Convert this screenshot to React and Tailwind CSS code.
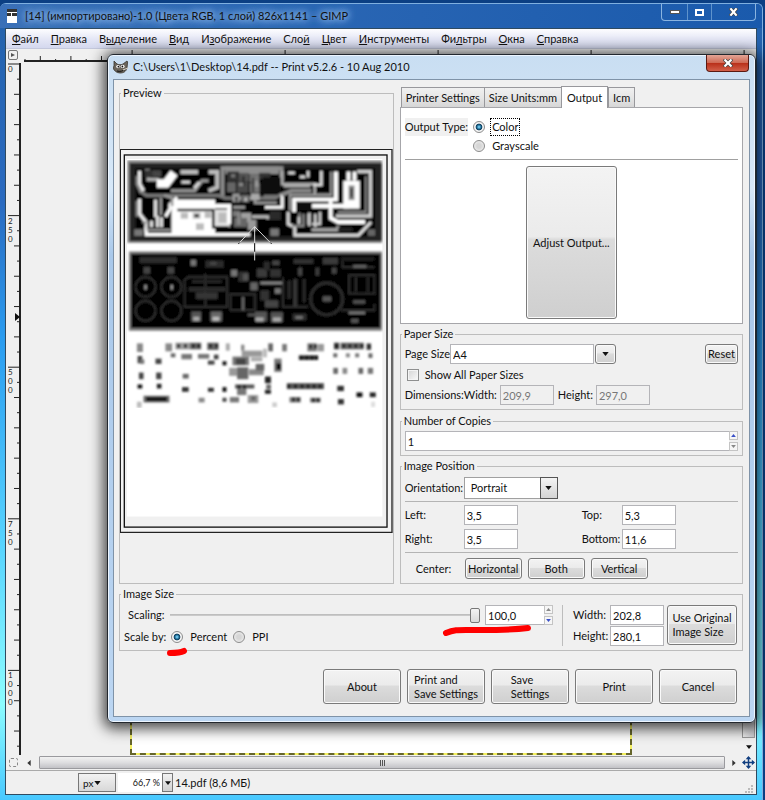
import { useState } from 'react';
import clsx from 'clsx';

const MENU = [
  ['', 'Ф', 'айл'],
  ['', 'П', 'равка'],
  ['В', 'ы', 'деление'],
  ['', 'В', 'ид'],
  ['И', 'з', 'ображение'],
  ['Сло', 'й', ''],
  ['', 'Ц', 'вет'],
  ['', 'И', 'нструменты'],
  ['Фи', 'л', 'ьтры'],
  ['', 'О', 'кна'],
  ['', 'С', 'правка'],
];

const TABS = ['Printer Settings', 'Size Units:mm', 'Output', 'Icm'];

// copper traces of the first board: [shade, stroke width, path]
const TRACES = [
  ['#8c8c8c', 12, 'M342 352V262H520V300'],
  ['#8c8c8c', 22, 'M350 268H512'],
  ['#777', 10, 'M92 330L112 344H330L350 352H500L520 340'],
  ['#eee', 10, 'M92 270V310L104 330M92 355V400L112 425V455'],
  ['#888', 8, 'M84 285V310L96 335M84 360V408'],
  ['#aaa', 10, 'M108 270H118V296H150'],
  ['#fff', 26, 'M144 308H172L196 276'],
  ['#bbb', 12, 'M215 273H268M300 273H326V320L300 330'],
  ['#999', 9, 'M186 330H258L280 300H300'],
  ['#ddd', 8, 'M218 304H244M256 322L272 304'],
  ['#fff', 10, 'M170 408L184 385V372L205 350'],
  ['#999', 8, 'M156 350V404M166 344L190 352V376'],
  ['#fff', 12, 'M205 376H362V430'],
  ['#ddd', 9, 'M140 356V410M128 420V440M146 405V440M158 410V440'],
  ['#fff', 10, 'M112 440V462H426'],
  ['#999', 6, 'M100 425H116V448H186'],
  ['#999', 8, 'M374 380H410M374 352H440V366H506'],
  ['#fff', 9, 'M470 380H522V340'],
  ['#bbb', 8, 'M430 408H478V416'],
  ['#aaa', 8, 'M522 270V310H620V340M526 316H606'],
  ['#888', 12, 'M520 342L550 330H610'],
  ['#ddd', 8, 'M540 276H560M575 288H592M600 270V290M640 270V312H616'],
  ['#fff', 12, 'M684 272V356H558V394'],
  ['#999', 7, 'M670 272V342H546V390'],
  ['#fff', 14, 'M612 376H724'],
  ['#fff', 12, 'M668 360V412L690 424H772'],
  ['#ccc', 10, 'M748 272H788V406H684'],
  ['#888', 6, 'M774 286V394H690'],
  ['#fff', 12, 'M740 272V300M722 272V300'],
  ['#fff', 50, 'M731 300V384'],
  ['#ddd', 9, 'M540 394V430L560 440V464H752L790 424'],
  ['#888', 7, 'M552 436H586V400M600 400V432M574 396V430'],
  ['#ccc', 8, 'M572 408V430M604 396V436M622 400V440M636 394V430H612'],
  ['#aaa', 10, 'M610 448H690V436'],
];

// grey chips in the dense middle of the first board: x, y, w, h, shade
const CHIPS = [
  [356, 272, 36, 30, '#333'], [392, 276, 30, 26, '#555'], [424, 280, 28, 24, '#777'], [452, 276, 34, 20, '#333'],
  [356, 304, 26, 30, '#666'], [386, 302, 34, 34, '#4a4a4a'], [424, 306, 30, 30, '#777'], [462, 290, 56, 46, '#111'],
  [372, 338, 22, 26, '#999'], [398, 342, 26, 22, '#666'], [428, 338, 26, 20, '#aaa'], [466, 342, 40, 14, '#777'],
  [372, 390, 24, 18, '#777'], [398, 396, 30, 30, '#a0a0a0'], [376, 412, 40, 28, '#666'], [418, 418, 26, 30, '#999'],
  [484, 392, 34, 26, '#2c2c2c'], [486, 444, 26, 22, '#777'], [780, 446, 22, 20, '#666'], [76, 446, 26, 20, '#777'],
  [108, 268, 30, 22, '#333'], [132, 268, 26, 20, '#444'], [568, 366, 40, 22, '#080808'], [690, 440, 44, 12, '#222'],
  [368, 280, 12, 10, '#777'], [400, 286, 10, 30, '#333'], [430, 290, 8, 44, '#444'], [440, 300, 10, 18, '#999'],
  [392, 306, 12, 10, '#888'], [380, 348, 8, 14, '#444'], [408, 350, 8, 12, '#bbb'], [386, 396, 10, 36, '#888'],
];

// silkscreen boxes of the second board
const SILK = [
  [92, 530, 112, 18, '#2f2f2f'], [104, 560, 20, 20, '#444'], [176, 560, 20, 20, '#444'], [246, 538, 16, 18, '#777'],
  [290, 540, 56, 22, '#2a2a2a'], [304, 544, 20, 10, '#444'], [368, 568, 18, 20, '#777'], [390, 574, 30, 30, '#333'],
  [404, 580, 16, 20, '#555'], [426, 606, 22, 24, '#666'], [456, 604, 66, 8, '#888'], [446, 564, 30, 26, '#3a3a3a'],
  [486, 566, 32, 24, '#333'], [492, 540, 22, 14, '#444'], [466, 544, 18, 26, '#2c2c2c'], [500, 624, 18, 16, '#777'],
  [456, 630, 26, 30, '#333'], [400, 650, 8, 40, '#666'], [418, 700, 50, 8, '#555'], [440, 694, 36, 30, '#555'],
  [442, 712, 24, 12, '#aaa'], [488, 696, 36, 30, '#555'], [494, 712, 24, 12, '#aaa'], [248, 694, 30, 30, '#555'],
  [254, 710, 18, 12, '#aaa'], [306, 694, 34, 30, '#666'], [312, 710, 20, 12, '#bbb'], [552, 700, 44, 20, '#2a2a2a'],
  [562, 708, 22, 8, '#777'], [556, 536, 60, 14, '#333'], [570, 562, 12, 24, '#444'], [622, 562, 12, 24, '#3a3a3a'],
  [644, 532, 46, 20, '#3a3a3a'], [672, 562, 14, 18, '#444'], [700, 530, 100, 10, '#222'], [736, 554, 40, 8, '#666'],
  [736, 660, 36, 10, '#555'], [722, 694, 50, 8, '#777'], [730, 716, 22, 12, '#555'], [644, 648, 26, 16, '#555'],
  [470, 660, 40, 22, '#444'], [240, 620, 110, 14, '#2a2a2a'], [262, 636, 66, 20, '#343434'], [250, 600, 90, 8, '#282828'],
  [556, 596, 10, 84, '#3a3a3a'], [538, 600, 10, 56, '#2a2a2a'], [584, 596, 8, 70, '#2c2c2c'],
];

// drill pads of the third board
const PADS = [
  [84, 790, 18, 26, '#888'], [170, 790, 20, 24, '#888'], [200, 788, 44, 20, '#999'], [244, 788, 34, 20, '#666'],
  [296, 788, 34, 22, '#666'], [352, 790, 12, 22, '#aaa'], [398, 794, 10, 18, '#888'], [480, 790, 14, 24, '#666'],
  [522, 792, 14, 22, '#777'], [598, 790, 28, 24, '#777'], [628, 792, 20, 22, '#999'], [678, 788, 16, 20, '#444'],
  [698, 788, 70, 20, '#666'], [776, 790, 14, 20, '#555'], [86, 828, 14, 22, '#444'], [94, 838, 12, 14, '#777'],
  [140, 836, 18, 16, '#444'], [186, 820, 14, 12, '#666'], [218, 822, 32, 16, '#777'], [268, 822, 34, 14, '#777'],
  [316, 824, 14, 14, '#444'], [298, 842, 20, 12, '#444'], [342, 844, 12, 12, '#111'], [572, 826, 58, 14, '#333'],
  [676, 820, 12, 12, '#666'], [714, 820, 12, 12, '#888'], [742, 820, 12, 12, '#777'], [782, 820, 12, 14, '#666'],
  [400, 812, 62, 18, '#999'], [372, 830, 50, 26, '#777'], [382, 836, 30, 18, '#444'], [428, 832, 34, 12, '#aaa'],
  [464, 806, 12, 26, '#bbb'], [498, 836, 22, 40, '#777'], [504, 850, 14, 20, '#111'], [362, 864, 24, 24, '#999'],
  [386, 862, 34, 36, '#666'], [422, 868, 44, 18, '#888'], [442, 852, 26, 20, '#666'], [470, 890, 18, 20, '#222'],
  [474, 914, 14, 14, '#666'], [90, 878, 14, 20, '#444'], [142, 878, 16, 20, '#444'], [222, 882, 18, 14, '#666'],
  [86, 914, 14, 12, '#111'], [144, 912, 14, 14, '#222'], [220, 922, 20, 14, '#333'], [298, 924, 18, 12, '#333'],
  [342, 922, 12, 14, '#111'], [380, 914, 58, 12, '#555'], [386, 926, 28, 20, '#777'], [536, 910, 112, 18, '#555'],
  [470, 930, 18, 12, '#222'], [676, 864, 14, 18, '#666'], [704, 864, 14, 18, '#888'], [752, 864, 14, 18, '#666'],
  [780, 864, 16, 18, '#777'], [688, 918, 20, 16, '#333'], [746, 938, 18, 14, '#111'], [786, 938, 18, 14, '#222'],
  [690, 958, 18, 16, '#333'], [104, 948, 78, 20, '#666'], [112, 952, 62, 12, '#111'], [84, 966, 14, 18, '#bbb'],
  [270, 954, 18, 14, '#888'], [342, 954, 12, 12, '#444'], [364, 952, 28, 16, '#777'], [418, 946, 32, 24, '#999'],
  [428, 950, 14, 12, '#666'], [544, 952, 34, 16, '#777'], [606, 954, 32, 14, '#777'], [492, 968, 14, 14, '#ccc'],
  [790, 966, 12, 16, '#ddd'],
];

// dark pins inside the longer pad rows
const PINS = [
  [206, 792], [226, 792], [250, 792], [266, 792], [302, 792], [320, 792], [682, 792], [704, 792], [722, 792], [740, 792],
  [758, 792], [780, 794], [576, 828], [592, 828], [608, 828], [622, 828], [538, 914], [558, 914], [578, 914], [596, 914],
  [614, 914], [632, 914], [388, 916], [404, 916], [552, 954], [566, 954], [612, 956], [626, 956], [604, 794], [618, 794],
];

const Rects = ({ items }) =>
  items.map(([x, y, w, h, fill], i) => <rect key={i} x={x} y={y} width={w} height={h} fill={fill} />);

const PreviewDrawing = () => (
  <svg viewBox="33 204 822 1158" className="block w-full" aria-label="Page preview">
    <filter id="thumb" x="0" y="0" width="1" height="1">
      <feGaussianBlur stdDeviation="3" />
    </filter>
    <rect x="34" y="205" width="819" height="1155" fill="#f2f2f2" stroke="#222" strokeWidth="4" />
    <rect x="46" y="222" width="792" height="1122" fill="#f0f0f0" stroke="#111" strokeWidth="4" />
    <rect x="54" y="234" width="770" height="1078" fill="#fff" />

    {/* the boards are a low resolution thumbnail, so they are drawn soft */}
    <g filter="url(#thumb)">
      <rect x="55" y="238" width="768" height="249" fill="#888" />
      <rect x="62" y="246" width="760" height="236" fill="#232323" />
      <rect x="80" y="262" width="722" height="206" fill="#050505" />
      <rect x="188" y="356" width="132" height="106" fill="#fff" />
      <rect x="318" y="386" width="46" height="54" fill="#e2e2e2" />
      <g fill="none">
        {TRACES.map(([stroke, width, d]) => (
          <path key={d} d={d} stroke={stroke} strokeWidth={width} />
        ))}
      </g>
      <path d="M206 388H314V440H360" fill="none" stroke="#111" strokeWidth="8" />
      <Rects items={CHIPS} />
      <g fill="#bbb">
        <rect x="216" y="396" width="22" height="18" />
        <rect x="252" y="396" width="24" height="18" />
        <rect x="288" y="394" width="20" height="18" />
        <rect x="262" y="428" width="24" height="20" />
        <rect x="330" y="396" width="24" height="30" />
      </g>
      <rect x="258" y="400" width="12" height="10" fill="#333" />
      <rect x="722" y="314" width="18" height="44" fill="#888" />
      <rect x="727" y="322" width="8" height="28" fill="#444" />

      <rect x="60" y="513" width="763" height="239" fill="#7c7c7c" />
      <rect x="66" y="520" width="752" height="224" fill="#030303" />
      <g fill="none" stroke="#2b2b2b" strokeWidth="7">
        <circle cx="110" cy="620" r="30" />
        <circle cx="188" cy="620" r="30" />
        <circle cx="110" cy="692" r="30" />
        <circle cx="188" cy="692" r="30" />
        <circle cx="656" cy="656" r="48" strokeWidth="10" />
        <path d="M228 598V680H356V590H240ZM290 580V680" />
        <path d="M366 642H440V690H366ZM524 592V680H600M724 584H800V640H724ZM744 590V634M780 590V634" />
        <path d="M700 690H800V670M704 540V560H800" />
      </g>
      <Rects items={SILK} />
      <g fill="#aaa">
        <rect x="107" y="614" width="6" height="14" />
        <rect x="186" y="614" width="6" height="14" />
      </g>

      <Rects items={PADS} />
      <g fill="#111">
        {PINS.map(([x, y]) => (
          <rect key={`${x}-${y}`} x={x} y={y} width="8" height="11" />
        ))}
      </g>
    </g>

    <path d="M439 438V490M439 438L390 490M439 438L490 490" fill="none" stroke="#ddd" strokeWidth="3" />
    <path d="M439 488V514M394 486L390 490M486 486L490 490" stroke="#000" strokeWidth="3" />
    <path d="M439 514V540" stroke="#ddd" strokeWidth="3" />
  </svg>
);

const Wilber = () => (
  <svg viewBox="0 0 16 14" className="h-[14px] w-4 shrink-0" aria-hidden="true">
    <path d="M1 6L1 1L4 4C6 5 8 5 10 4L14 1L14.6 2L14 8C13 12 10 13 7 13C3 13 1 10 0 8Z" fill="#6b655c" stroke="#39352f" strokeWidth="0.8" />
    <ellipse cx="5" cy="6.6" rx="1.8" ry="1.6" fill="#fff" />
    <ellipse cx="9.6" cy="6.4" rx="2" ry="1.7" fill="#fff" />
    <circle cx="5.4" cy="6.7" r="0.9" fill="#111" />
    <circle cx="9.4" cy="6.5" r="0.9" fill="#111" />
    <path d="M4 11C7 12 10 11 13 9" stroke="#111" strokeWidth="1" fill="none" />
    <path d="M10 10L15 8" stroke="#d8d2c6" strokeWidth="1.2" />
  </svg>
);

const Arrow = ({ dir = 'down', className }) => (
  <svg viewBox="0 0 8 5" className={className} aria-hidden="true">
    <path d={dir === 'down' ? 'M0 0H8L4 5Z' : 'M0 5H8L4 0Z'} fill="currentColor" />
  </svg>
);

const Group = ({ title, className, bodyClass, children }) => (
  <fieldset className={clsx('min-w-0 border border-[#bdbdbd]', className)}>
    <legend className="ml-px h-4 px-[2px] leading-4">{title}</legend>
    <div className={bodyClass}>{children}</div>
  </fieldset>
);

const Field = ({ id, value, disabled, className }) => (
  <input
    id={id}
    type="text"
    defaultValue={value}
    disabled={disabled}
    className={clsx(
      'h-5 min-w-0 border border-[#b4b4b8] px-[2px] outline-none',
      disabled ? 'bg-[#f0f0f0] text-[#777]' : 'bg-white text-[#111]',
      className
    )}
  />
);

const Button = ({ className, children }) => (
  <button
    type="button"
    className={clsx(
      'flex items-center justify-center rounded-[3px] border border-[#7a7a7a] bg-[linear-gradient(#f3f3f3,#ebebeb_46%,#dcdcdc_48%,#cfcfcf)] shadow-[inset_0_0_0_1px_#fafafa]',
      className
    )}
  >
    {children}
  </button>
);

const Radio = ({ name, label, checked, onChange, focused, className }) => (
  <label className={clsx('flex items-center', className)}>
    <input
      type="radio"
      name={name}
      checked={checked}
      onChange={onChange}
      className="mr-[5px] size-3 shrink-0 appearance-none rounded-full border border-[#8c8c8c] bg-[radial-gradient(circle,#d6d6d6_30%,#f8f8f8)] checked:bg-[radial-gradient(circle,#6cc6ee_8%,#12567c_34%,#123c58_44%,#f4f4f4_52%)]"
    />
    <span className={clsx('border px-px leading-4', focused ? 'border-dotted border-black' : 'border-transparent')}>{label}</span>
  </label>
);

const Spinner = ({ active, label }) => (
  <div className="flex h-5 w-[9px] shrink-0 flex-col justify-between">
    <button type="button" aria-label={`${label} up`} className={clsx('flex h-[9px] items-center justify-center border border-[#c4c4c4] bg-[#f6f6f6]', active === 'up' ? 'text-[#3a50c8]' : 'text-[#888]')}>
      <Arrow dir="up" className="h-[3px] w-[5px]" />
    </button>
    <button type="button" aria-label={`${label} down`} className={clsx('flex h-[9px] items-center justify-center border border-[#c4c4c4] bg-[#f6f6f6]', active === 'down' ? 'text-[#3a50c8]' : 'text-[#888]')}>
      <Arrow className="h-[3px] w-[5px]" />
    </button>
  </div>
);

const VerticalRuler = () => {
  const ticks = Array.from({ length: 46 }, (_, i) => i);
  return (
    <svg width="14" className="h-full shrink-0" aria-hidden="true">
      <path d="M13 0V1200" stroke="#222" strokeWidth="2" />
      {ticks.map((i) => {
        const y = 1 + i * 15.16;
        const length = i % 10 === 0 ? 12 : i % 2 === 0 ? 6 : 3;
        return <path key={i} d={`M${13 - length} ${y}H13`} stroke="#222" />;
      })}
      {['0', '250', '500', '750', '1000'].map((text, n) =>
        text.split('').map((ch, k) => (
          <text key={`${text}${k}`} x="1" y={9 + n * 151.6 + k * 9} fontSize="8" fill="#222">
            {ch}
          </text>
        ))
      )}
      <path d="M8 250L13 254L8 258Z" fill="#111" />
    </svg>
  );
};

const HorizontalRuler = () => (
  <svg height="14" className="min-w-0 flex-1" aria-hidden="true">
    <path d="M2 12H1200" stroke="#222" strokeWidth="2" />
    {Array.from({ length: 50 }, (_, i) => (
      <path key={i} d={`M${3 + i * 15.3} 12V${(i - 7) % 10 === 0 ? 1 : i % 2 === 1 ? 7 : 10}`} stroke="#222" />
    ))}
  </svg>
);

const OutputTab = () => {
  const [type, setType] = useState('color');
  return (
    <div className="flex h-[217px] flex-col border border-[#a6a6aa] bg-white px-1 pt-[10px] pb-1">
      <div className="flex items-start gap-[5px]">
        <span className="bg-[#f0f0f0] leading-[18px]">Output Type:</span>
        <div className="flex flex-col gap-px">
          <Radio name="output" label="Color" focused checked={type === 'color'} onChange={() => setType('color')} />
          <Radio name="output" label="Grayscale" checked={type === 'gray'} onChange={() => setType('gray')} />
        </div>
      </div>
      <hr className="mt-1 mb-[6px] border-[#a0a0a0]" />
      <Button className="mx-auto h-[153px] w-[91px]">Adjust Output...</Button>
    </div>
  );
};

const PrintDialog = () => {
  const [scaleBy, setScaleBy] = useState('percent');

  return (
    <section className="absolute top-[54px] right-[9px] left-[107px] rounded-[6px] border border-[#23282e] bg-[linear-gradient(#c9def2,#d7e8f8_20%,#a9c8ea_30%,#bcd6f2)] px-[5px] pb-[5px] shadow-[inset_0_0_0_1px_#eef6ff,0_2px_14px_4px_rgba(0,0,0,0.7)]">
      <header className="flex h-6 items-center gap-1">
        <Wilber />
        <h2 className="flex-1">C:\Users\1\Desktop\14.pdf -- Print v5.2.6 - 10 Aug 2010</h2>
        <button type="button" aria-label="Close" className="mr-px flex h-[17px] w-[43px] items-center justify-center self-start rounded-b-[4px] border border-t-0 border-[#5b1a12] bg-[linear-gradient(#e3a596,#cf6a55_48%,#b9301a_52%,#d2604a)]">
          <svg viewBox="0 0 10 8" className="h-2 w-[10px]" aria-hidden="true">
            <path d="M1 0L9 8M9 0L1 8" stroke="#444" strokeWidth="3.6" />
            <path d="M1.5 0.5L8.5 7.5M8.5 0.5L1.5 7.5" stroke="#fff" strokeWidth="2.2" />
          </svg>
        </button>
      </header>

      <div className="border border-[#7f93a8] bg-[#f0f0f0] pt-[5px] pr-[6px] pb-3 pl-[5px]">
        <div className="grid grid-cols-[4fr_5fr] gap-[6px]">
          <Group title="Preview" bodyClass="flex h-full flex-col justify-center pb-[2px]">
            <PreviewDrawing />
          </Group>

          <div className="flex min-w-0 flex-col">
            <div role="tablist" className="flex items-end pt-px pl-px">
              {TABS.map((tab) => (
                <button
                  key={tab}
                  type="button"
                  role="tab"
                  aria-selected={tab === 'Output'}
                  className={clsx(
                    'border border-b-0 border-[#98989c]',
                    tab === 'Output'
                      ? 'relative -mb-px h-[22px] bg-white px-[5px]'
                      : 'h-5 bg-[linear-gradient(#f0f0f0,#e6e6e6_50%,#d6d6d6)] px-1',
                    (tab === 'Printer Settings' || tab === 'Size Units:mm') && 'border-r-0'
                  )}
                >
                  {tab}
                </button>
              ))}
            </div>
            <OutputTab />

            <Group title="Paper Size" className="mt-[2px]" bodyClass="px-1 pt-[2px] pb-1">
              <div className="flex items-center">
                <label htmlFor="page-size">Page Size</label>
                <Field id="page-size" value="A4" className="w-[144px]" />
                <Button className="ml-px h-5 w-[21px]">
                  <Arrow className="h-1 w-[7px]" />
                </Button>
                <Button className="ml-auto h-5 w-[33px]">Reset</Button>
              </div>
              <label className="flex h-[21px] items-center gap-[6px] pl-[2px]">
                <input type="checkbox" className="size-3 appearance-none border border-[#8e8f8f] bg-[linear-gradient(135deg,#d4d4d4,#fafafa)] shadow-[inset_0_0_0_1px_#f4f4f4] checked:bg-[#12567c]" />
                Show All Paper Sizes
              </label>
              <div className="flex items-center">
                <span>Dimensions:</span>
                <label htmlFor="paper-width">Width:</label>
                <Field id="paper-width" value="209,9" disabled className="ml-[3px] w-[54px]" />
                <label htmlFor="paper-height" className="ml-1">Height:</label>
                <Field id="paper-height" value="297,0" disabled className="ml-[3px] w-[54px]" />
              </div>
            </Group>

            <Group title="Number of Copies" className="mt-[3px]" bodyClass="px-1 pt-[2px] pb-1">
              <div className="flex">
                <input aria-label="Number of Copies" defaultValue="1" className="h-5 min-w-0 flex-1 border border-r-0 border-[#b4b4b8] bg-white px-[2px]" />
                <Spinner active="up" label="Copies" />
              </div>
            </Group>

            <Group title="Image Position" className="mt-[2px]" bodyClass="px-1 pt-[3px] pb-1">
              <div className="flex items-center">
                <label htmlFor="orientation" className="w-[59px]">Orientation:</label>
                <div className="relative">
                  <select id="orientation" className="h-[22px] w-[94px] appearance-none border border-[#a0a0a0] bg-white pl-[6px]">
                    <option>Portrait</option>
                    <option>Landscape</option>
                  </select>
                  <span className="pointer-events-none absolute inset-y-0 right-0 flex w-[18px] items-center justify-center border border-[#555] bg-[linear-gradient(#f4f4f4,#d4d4d4)]">
                    <Arrow className="h-1 w-[7px]" />
                  </span>
                </div>
              </div>
              <hr className="mt-[2px] mb-[3px] border-[#b4b4b4]" />
              <div className="grid grid-cols-[59px_118px_40px_54px] items-center gap-y-1">
                <label htmlFor="pos-left">Left:</label>
                <Field id="pos-left" value="3,5" className="w-[54px]" />
                <label htmlFor="pos-top">Top:</label>
                <Field id="pos-top" value="5,3" />
                <label htmlFor="pos-right">Right:</label>
                <Field id="pos-right" value="3,5" className="w-[54px]" />
                <label htmlFor="pos-bottom">Bottom:</label>
                <Field id="pos-bottom" value="11,6" />
              </div>
              <hr className="mt-[3px] mb-[5px] border-[#b4b4b4]" />
              <div className="flex items-center gap-[6px] pl-[11px]">
                <span className="w-[43px]">Center:</span>
                <Button className="h-[21px] w-[57px]">Horizontal</Button>
                <Button className="h-[21px] w-[57px]">Both</Button>
                <Button className="h-[21px] w-[57px]">Vertical</Button>
              </div>
            </Group>
          </div>
        </div>

        <Group title="Image Size" className="relative mt-[2px]" bodyClass="flex px-1 pt-[3px] pb-px">
          <div className="min-w-0 flex-1">
            <div className="flex items-center pl-1">
              <label htmlFor="scaling">Scaling:</label>
              <input
                id="scaling"
                type="range"
                defaultValue="100"
                className="mx-[5px] h-4 min-w-0 flex-1 appearance-none bg-[linear-gradient(#b8b8b8,#d0d0d0)] bg-[length:100%_2px] bg-center bg-no-repeat [&::-webkit-slider-thumb]:h-[15px] [&::-webkit-slider-thumb]:w-[10px] [&::-webkit-slider-thumb]:appearance-none [&::-webkit-slider-thumb]:rounded-[2px] [&::-webkit-slider-thumb]:border [&::-webkit-slider-thumb]:border-[#777] [&::-webkit-slider-thumb]:bg-[linear-gradient(#f4f4f4,#dadada)]"
              />
              <Field id="scaling-value" value="100,0" className="w-[59px] border-r-0" />
              <Spinner active="down" label="Scaling" />
            </div>
            <div className="flex h-6 items-center">
              <span className="mr-[5px]">Scale by:</span>
              <Radio name="scale" label="Percent" checked={scaleBy === 'percent'} onChange={() => setScaleBy('percent')} className="mr-1" />
              <Radio name="scale" label="PPI" checked={scaleBy === 'ppi'} onChange={() => setScaleBy('ppi')} />
            </div>
          </div>
          <div className="mr-[10px] mb-[3px] ml-[9px] w-px bg-[#bdbdbd]" />
          <div className="grid grid-cols-[37px_54px] content-start items-center gap-y-px">
            <label htmlFor="img-width">Width:</label>
            <Field id="img-width" value="202,8" />
            <label htmlFor="img-height">Height:</label>
            <Field id="img-height" value="280,1" />
          </div>
          <Button className="mr-px ml-[3px] h-10 w-[70px] text-left leading-[14px]">
            Use Original
            <br />
            Image Size
          </Button>
          {/* red pen marks over the scale controls */}
          <svg viewBox="0 0 24 10" className="absolute top-[45px] left-[46px] h-[10px] w-6" aria-hidden="true">
            <path d="M4 6C10 6 14 6 18 4" stroke="#f00" strokeWidth="6" strokeLinecap="round" fill="none" />
          </svg>
          <svg viewBox="0 0 92 16" className="absolute top-[21px] right-[209px] h-4 w-[92px]" aria-hidden="true">
            <path d="M5 10C14 6 18 7 40 7C58 7 70 7 87 5" stroke="#f00" strokeWidth="6" strokeLinecap="round" fill="none" />
          </svg>
        </Group>

        <div className="mt-[18px] flex justify-end gap-[6px] pr-[6px]">
          <Button className="h-[35px] w-[78px]">About</Button>
          <Button className="h-[35px] w-[78px] text-left leading-[14px]">
            Print and
            <br />
            Save Settings
          </Button>
          <Button className="h-[35px] w-[78px] text-left leading-[14px]">
            Save
            <br />
            Settings
          </Button>
          <Button className="h-[35px] w-[78px]">Print</Button>
          <Button className="h-[35px] w-[78px]">Cancel</Button>
        </div>
      </div>
    </section>
  );
};

const App = () => (
  <div className="relative flex h-screen min-h-[740px] flex-col overflow-hidden bg-[#0b3f83] pt-[3px] pr-[2px] font-['Lato','Open_Sans',sans-serif] text-[11px] leading-4 text-[#111]">
    <main className="flex min-h-0 flex-1 flex-col rounded-t-[6px] border-t border-r border-[#7fb0e0] bg-[linear-gradient(#2462ac,#2a6ac0_25%,#2a9cf0_42%,#58d4ff_68%,#8cfcff_88%,#48c8ff)] pr-[5px] pb-[5px] pl-[5px]">
      <header className="-mx-[5px] flex h-6 items-center rounded-t-[5px] bg-[linear-gradient(100deg,#3a70b8,#2a66b4_40%,#1a5aac)] pr-[6px] pl-[7px]">
        <svg viewBox="0 0 10 14" className="mr-2 h-[14px] w-[10px]" aria-hidden="true">
          <path d="M0 0H10V14H0Z" fill="#fff" />
          <path d="M0 0H10V3H0ZM0 4H4V7H0ZM5 4H10V7H5Z" fill="#333" />
        </svg>
        <h1 className="flex-1 [text-shadow:0_0_6px_#9cc4f0,0_0_8px_#9cc4f0,0_0_10px_#9cc4f0]">[14] (импортировано)-1.0 (Цвета RGB, 1 слой) 826x1141 – GIMP</h1>
        <div className="flex h-[17px] self-start rounded-b-[4px] border border-t-0 border-[#8ab4e0]">
          <button type="button" aria-label="Minimize" className="flex w-[26px] items-center justify-center border-r border-[#5f93cc]">
            <span className="h-1 w-[10px] border border-[#555] bg-white" />
          </button>
          <button type="button" aria-label="Maximize" className="flex w-6 items-center justify-center border-r border-[#5f93cc]">
            <span className="h-[7px] w-[9px] border-2 border-white" />
          </button>
          <button type="button" aria-label="Close" className="flex w-[43px] items-center justify-center">
            <svg viewBox="0 0 9 8" className="h-2 w-[9px]" aria-hidden="true">
              <path d="M1 0L8 8M8 0L1 8" stroke="#444" strokeWidth="3.4" />
              <path d="M1.4 0.4L7.6 7.6M7.6 0.4L1.4 7.6" stroke="#fff" strokeWidth="2.2" />
            </svg>
          </button>
        </div>
      </header>

      <div className="flex min-h-0 flex-1 flex-col border border-[#2f4a60] bg-[#f0f0f0]">
        <nav className="flex h-5 shrink-0 items-center gap-3 border-b border-[#c4c8dc] bg-[linear-gradient(#fdfdff,#e6e8f6_50%,#d4d8ee)] px-[6px]">
          {MENU.map(([before, key, after]) => (
            <a key={key + after} href="#">
              {before}
              <u>{key}</u>
              {after}
            </a>
          ))}
        </nav>

        <div className="flex shrink-0 pl-[2px]">
          <button type="button" aria-label="Image menu" className="mt-px flex size-[10px] items-center justify-center rounded-[2px] border border-[#777]">
            <svg viewBox="0 0 6 6" className="size-1" aria-hidden="true">
              <path d="M0 0L6 3L0 6Z" fill="#555" />
            </svg>
          </button>
          <div className="w-1" />
          <HorizontalRuler />
        </div>

        <div className="flex min-h-0 flex-1 pl-px">
          <VerticalRuler />
          <div className="min-w-0 flex-1 pl-[109px]">
            <div className="h-full w-[502px] bg-[#f4f060]">
              <div className="h-full border-2 border-dashed border-[#66662c] bg-white bg-clip-padding" />
            </div>
          </div>
          <div className="flex w-[14px] flex-col pr-px">
            <div className="flex-1 border border-[#999] bg-[linear-gradient(90deg,#f0f0f0,#c8c8cc)]" />
            <button type="button" aria-label="Scroll down" className="flex h-[17px] items-center justify-center">
              <Arrow className="h-1 w-[6px]" />
            </button>
          </div>
        </div>

        <div className="flex h-4 shrink-0 items-center border-b border-[#aaa] pl-[3px]">
          <span className="size-[9px] rounded-[2px] border border-dashed border-[#888]" />
          <button type="button" aria-label="Scroll left" className="flex w-[21px] items-center justify-center">
            <svg viewBox="0 0 4 7" className="h-[6px] w-1" aria-hidden="true">
              <path d="M4 0V7L0 3.5Z" fill="#333" />
            </svg>
          </button>
          <div className="flex h-[13px] flex-1 items-center justify-center gap-px rounded-[1px] border border-[#9a9a9e] bg-[linear-gradient(#f2f2f2,#dedee0_50%,#c2c2c6)]">
            <i className="h-[6px] w-px bg-[#555]" />
            <i className="h-[6px] w-px bg-[#555]" />
            <i className="h-[6px] w-px bg-[#555]" />
          </div>
          <button type="button" aria-label="Scroll right" className="flex w-[17px] items-center justify-center">
            <svg viewBox="0 0 4 7" className="h-[6px] w-1" aria-hidden="true">
              <path d="M0 0V7L4 3.5Z" fill="#333" />
            </svg>
          </button>
          <button type="button" aria-label="Navigate" className="mr-px">
            <svg viewBox="0 0 14 14" className="size-[13px]" aria-hidden="true">
              <path d="M7 1V13M1 7H13" stroke="#123f80" strokeWidth="1.6" />
              <path d="M7 0L10 3.4H4ZM7 14L10 10.6H4ZM0 7L3.4 4V10ZM14 7L10.6 4V10Z" fill="#123f80" />
            </svg>
          </button>
        </div>

        <footer className="flex h-[23px] shrink-0 items-center pl-[72px]">
          <div className="relative">
            <select aria-label="Units" className="h-[19px] w-[38px] appearance-none border border-[#777] bg-[linear-gradient(#f2f2f2,#d8d8d8)] pl-1 text-[10px]">
              <option>px</option>
            </select>
            <Arrow className="pointer-events-none absolute top-2 right-[15px] h-1 w-[7px]" />
          </div>
          <input aria-label="Zoom" defaultValue="66,7 %" className="ml-[2px] h-[19px] w-[44px] bg-white pr-[2px] text-right text-[9px]" />
          <button type="button" aria-label="Zoom list" className="flex h-[19px] w-[11px] items-center justify-center border border-[#777] bg-[linear-gradient(#f2f2f2,#d0d0d0)]">
            <Arrow className="h-1 w-[6px]" />
          </button>
          <span className="ml-[2px] flex-1">14.pdf (8,6 МБ)</span>
          <svg viewBox="0 0 9 9" className="mr-[2px] size-[9px] self-end" aria-hidden="true">
            <path d="M6 0H8V2H6ZM3 3H5V5H3ZM6 3H8V5H6ZM0 6H2V8H0ZM3 6H5V8H3ZM6 6H8V8H6Z" fill="#bbb" />
          </svg>
        </footer>
      </div>
    </main>
    <PrintDialog />
  </div>
);

export default App;
